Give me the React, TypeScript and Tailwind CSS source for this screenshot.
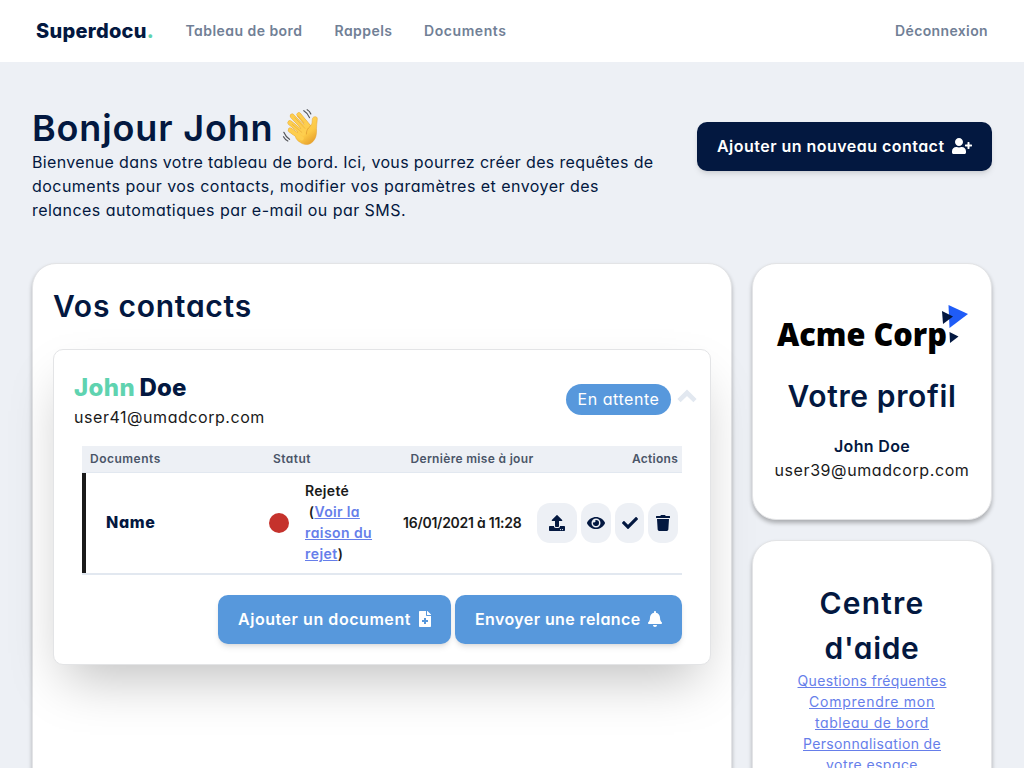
import type { ReactNode } from 'react';
import { FaBell, FaCheck, FaEye, FaFileMedical, FaTrash, FaUpload, FaUserPlus } from 'react-icons/fa';

function WavingHand() {
  return (
    <svg width="37" height="38" viewBox="18 14 108 114" fill="none" strokeLinecap="round">
      <defs>
        <linearGradient id="skin" x1="0.2" y1="0" x2="0.8" y2="1">
          <stop offset="0" stopColor="#ffd860" />
          <stop offset="0.6" stopColor="#fcc845" />
          <stop offset="1" stopColor="#e39a28" />
        </linearGradient>
      </defs>
      <g stroke="#e5a332" strokeWidth="14">
        <path d="M67 31 98 68" />
        <path d="M47 35 88 78" />
        <path d="M40 55 80 88" />
        <path d="M41 77 76 102" />
      </g>
      <path
        d="M60 88 88 54l13 11c5-4 6-9 6-16 0-8 3-12 9-12 7 0 7 6 6 12-1 9-2 15-2 24 1 18-2 30-11 39-11 11-26 11-38 2C62 108 52 100 60 88z"
        fill="url(#skin)"
        stroke="#e5a332"
        strokeWidth="1.5"
      />
      <g stroke="#fdce4f" strokeWidth="12">
        <path d="M67 31 96 66" />
        <path d="M47 35 88 78" />
        <path d="M40 55 80 88" />
        <path d="M41 77 76 102" />
      </g>
      <path d="M55 40 85 72M47 60 76 84M64 34 82 55" stroke="#e5a332" strokeWidth="1.6" />
      <path d="M101 66c-8 6-12 14-11 23" stroke="#dc962c" strokeWidth="2" />
      <path d="M82 19q12 7 17 21M92 16q8 4 11 13M22 84q6 14 17 21M21 97q5 9 13 13" stroke="#55565a" strokeWidth="3.6" />
    </svg>
  );
}

function ChevronUp() {
  return (
    <svg width="20" height="14" viewBox="0 0 20 14" fill="none" stroke="#e2e8f0" strokeWidth="4.6">
      <path d="M2 11.600 10 3.800 18 11.600" />
    </svg>
  );
}

function Card({ className, children }: { className: string; children: ReactNode }) {
  return (
    <section
      className={`rounded-3xl border border-[#e3e4e6] bg-white shadow-[0_3px_4px_rgba(0,0,0,0.28)] ${className}`}
    >
      {children}
    </section>
  );
}

function Heading({ className, children }: { className: string; children: ReactNode }) {
  return <h2 className={`text-[30px] leading-[45px] font-semibold text-[#031840] ${className}`}>{children}</h2>;
}

function BigButton({ className, children }: { className: string; children: ReactNode }) {
  return (
    <button
      className={`flex h-[49px] shrink-0 items-center justify-between rounded-[10px] pl-5 font-semibold whitespace-nowrap text-white shadow-md ${className}`}
    >
      {children}
    </button>
  );
}

function RoundAction({ className, children }: { className: string; children: ReactNode }) {
  return (
    <button className={`flex h-10 items-center justify-center rounded-[13px] bg-[#edf0f5] text-[#031840] ${className}`}>
      {children}
    </button>
  );
}

function Header() {
  return (
    <header className="flex h-[62px] items-center bg-white pr-9 pl-9 text-sm font-semibold text-[#718096]">
      <a className="w-[149.5px] text-xl font-extrabold tracking-[0.28px] text-[#031840]">
        Superdocu<span className="text-[#5fd3b0]">.</span>
      </a>
      <nav className="flex grow whitespace-nowrap">
        <a className="w-[149px] tracking-[0.45px]">Tableau de bord</a>
        <a className="w-[89.5px] tracking-[0.45px]">Rappels</a>
        <a className="tracking-[0.57px]">Documents</a>
      </nav>
      <a className="tracking-[0.37px]">Déconnexion</a>
    </header>
  );
}

function DocumentTable() {
  return (
    <div className="mt-[17px] ml-2 w-[600px]">
      <div className="flex h-[27px] items-center border-b border-[#e2e8f0] bg-[#edf0f5] pr-1 pl-2 text-xs font-semibold whitespace-nowrap text-[#4a5568]">
        <span className="w-[183px] tracking-[0.5px]">Documents</span>
        <span className="w-[137.5px] tracking-[0.46px]">Statut</span>
        <span className="grow tracking-[0.32px]">Dernière mise à jour</span>
        <span className="tracking-[0.26px]">Actions</span>
      </div>
      <div className="flex h-[102px] border-b-2 border-[#e2e8f0]">
        <div className="w-1 bg-[#1a1a1a]" />
        <div className="flex grow items-center pr-1 pl-5">
          <span className="w-[163px] pb-0.5 font-extrabold tracking-[0.65px] text-[#031840]">Name</span>
          <span className="mr-4 size-5 rounded-full bg-[#c5322c]" />
          <div className="w-[98px] pb-0.5 text-sm leading-[21px] font-semibold whitespace-nowrap text-[#1a1a1a]">
            <div className="tracking-[0.3px]">Rejeté</div>
            <div className="tracking-[0.34px]">
              &nbsp;(<a className="text-[#667eea] underline">Voir la</a>
            </div>
            <div className="tracking-[0.42px]">
              <a className="text-[#667eea] underline">raison du</a>
            </div>
            <div className="tracking-[0.45px]">
              <a className="text-[#667eea] underline">rejet</a>)
            </div>
          </div>
          <span className="w-[134px] text-sm font-semibold tracking-[-0.25px] whitespace-nowrap text-[#1a1a1a]">
            16/01/2021 à 11:28
          </span>
          <div className="flex grow justify-between">
            <RoundAction className="w-10">
              <FaUpload />
            </RoundAction>
            <RoundAction className="w-[30px]">
              <FaEye className="size-[18px]" />
            </RoundAction>
            <RoundAction className="w-[29px]">
              <FaCheck />
            </RoundAction>
            <RoundAction className="w-[30px]">
              <FaTrash />
            </RoundAction>
          </div>
        </div>
      </div>
    </div>
  );
}

function ContactCard() {
  return (
    <article className="mt-5 h-[316px] rounded-[10px] border border-[#e3e4e6] bg-white py-5 pl-5 shadow-2xl">
      <div className="flex items-center pr-[13px]">
        <div className="grow">
          <h3 className="flex text-2xl leading-9 font-extrabold text-[#031840]">
            <span className="w-[65.5px] tracking-[0.4px] text-[#5fd3b0]">John</span>
            <span className="tracking-[0.2px]">Doe</span>
          </h3>
          <p className="-mt-px tracking-[0.55px] text-[#1a1a1a]">user41@umadcorp.com</p>
        </div>
        <span className="mr-[6px] mb-px flex h-[31px] w-[105px] items-center justify-center rounded-full bg-[#5798dc] tracking-[0.55px] whitespace-nowrap text-white">
          En attente
        </span>
        <span className="mb-[7px]">
          <ChevronUp />
        </span>
      </div>
      <DocumentTable />
      <div className="mt-5 mr-7 flex justify-end gap-1">
        <BigButton className="w-[233px] bg-[#5798dc] pr-[18px] pb-0.5">
          <span className="tracking-[0.55px]">Ajouter un document</span>
          <FaFileMedical />
        </BigButton>
        <BigButton className="w-[227px] bg-[#5798dc] pr-[19px] pb-0.5">
          <span className="tracking-[0.4px]">Envoyer une relance</span>
          <FaBell />
        </BigButton>
      </div>
    </article>
  );
}

function AcmeLogo() {
  return (
    <svg width="194" height="54" viewBox="0 0 194 54" className="mx-auto">
      <text
        x="2"
        y="42"
        textLength="170"
        lengthAdjust="spacingAndGlyphs"
        className="fill-black font-['Open_Sans',sans-serif] text-[31px] font-extrabold"
      >
        Acme Corp
      </text>
      <path d="M173.500 1 193 10 174.500 24z" fill="#1f5cf7" />
      <path d="M167 7 178 12.500 168 20z" fill="#031840" />
      <path d="M174.500 28 183.500 32.500 175 39z" fill="#031840" />
    </svg>
  );
}

export default function App() {
  return (
    <div className="h-screen overflow-hidden bg-[#edf0f5] font-['Inter',sans-serif] text-base text-[#031840] [font-feature-settings:'cv11']">
      <Header />
      <main className="px-8">
        <div className="flex h-[201px] items-start justify-between pt-[43.5px]">
          <div>
            <h1 className="flex items-center gap-[9px] text-4xl leading-[45px] font-semibold tracking-[0.85px]">
              Bonjour John <WavingHand />
            </h1>
            <p className="-mt-px whitespace-nowrap">
              <span className="block tracking-[0.347px]">
                Bienvenue dans votre tableau de bord. Ici, vous pourrez créer des requêtes de
              </span>
              <span className="block tracking-[0.465px]">
                documents pour vos contacts, modifier vos paramètres et envoyer des
              </span>
              <span className="block tracking-[0.451px]">relances automatiques par e-mail ou par SMS.</span>
            </p>
          </div>
          <BigButton className="mt-4 w-[295px] bg-[#031840] pr-5">
            <span className="tracking-[0.47px]">Ajouter un nouveau contact</span>
            <FaUserPlus className="h-4 w-5" />
          </BigButton>
        </div>
        <div className="flex items-start gap-5">
          <Card className="h-[600px] w-[700px] p-5">
            <Heading className="tracking-[0.76px]">Vos contacts</Heading>
            <ContactCard />
          </Card>
          <aside className="flex w-60 flex-col gap-5 text-center">
            <Card className="h-[257px] pt-10">
              <AcmeLogo />
              <Heading className="mt-4 tracking-[0.64px]">Votre profil</Heading>
              <p className="mt-[15px] font-semibold tracking-[0.33px]">John Doe</p>
              <p className="tracking-[0.59px] text-[#1a1a1a]">user39@umadcorp.com</p>
            </Card>
            <Card className="h-[400px] pt-10">
              <Heading className="tracking-[1.2px]">Centre</Heading>
              <Heading className="tracking-[0.67px]">d'aide</Heading>
              <div className="-mt-px text-sm leading-[21px] text-[#667eea]">
                <a className="block tracking-[0.34px] underline">Questions fréquentes</a>
                <a className="block underline">
                  <span className="block tracking-[0.74px]">Comprendre mon</span>
                  <span className="block tracking-[0.59px]">tableau de bord</span>
                </a>
                <a className="block underline">
                  <span className="block tracking-[0.355px]">Personnalisation de</span>
                  <span className="block tracking-[0.45px]">votre espace</span>
                </a>
              </div>
            </Card>
          </aside>
        </div>
      </main>
    </div>
  );
}
